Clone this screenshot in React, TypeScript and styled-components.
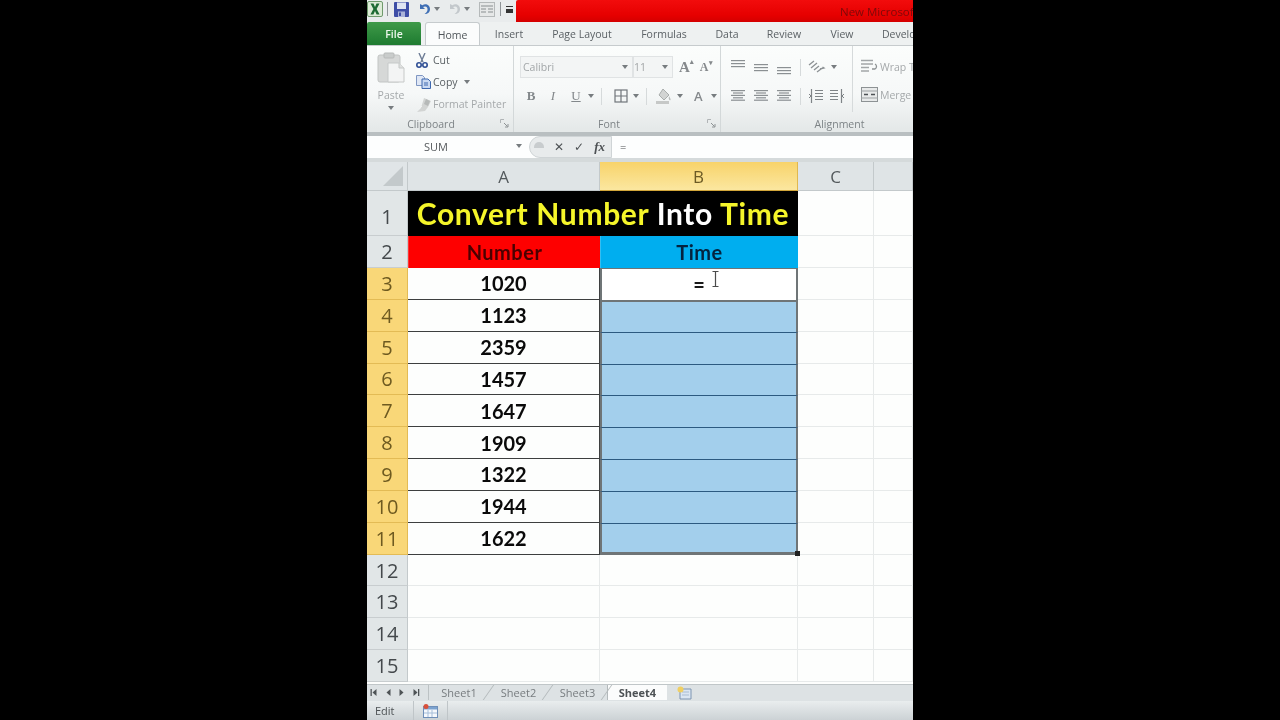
import React from 'react';
import styled, { createGlobalStyle } from 'styled-components';

const rows = ['1020', '1123', '2359', '1457', '1647', '1909', '1322', '1944', '1622'];
const tabs = [
  { label: 'Insert', w: 58 },
  { label: 'Page Layout', w: 88 },
  { label: 'Formulas', w: 76 },
  { label: 'Data', w: 50 },
  { label: 'Review', w: 64 },
  { label: 'View', w: 52 },
  { label: 'Developer', w: 78 },
];

const Caret = () => (
  <svg width="6" height="4" viewBox="0 0 6 4" style={{ flex: 'none' }}><path d="M0 0h6L3 4z" fill="#777c7f" /></svg>
);

const Lines = ({ widths, step = 3, color = '#8b9093' }: { widths: number[]; step?: number; color?: string }) => (
  <svg width="16" height={widths.length * step} viewBox={`0 0 16 ${widths.length * step}`}>
    {widths.map((w, i) => (
      <rect key={i} x={(16 - w) / 2} y={i * step} width={w} height="1.2" fill={color} />
    ))}
  </svg>
);

const ExcelIcon = () => (
  <svg width="16" height="16" viewBox="0 0 16 16">
    <rect x="0.5" y="0.5" width="15" height="15" rx="1.5" fill="#dcebd6" stroke="#6f9a6c" />
    <path d="M3.500 2.500h3L8 6l1.500-3.500h3L9.600 8l3 5.500h-3L8 10l-1.600 3.500h-3l3-5.500z" fill="#1e6b33" />
  </svg>
);

const SaveIcon = () => (
  <svg width="15" height="15" viewBox="0 0 15 15">
    <rect width="15" height="15" rx="1" fill="#3e4ea6" />
    <rect x="3" y="0.5" width="9" height="6.5" fill="#dfe4f2" />
    <rect x="4" y="9.5" width="7" height="5.5" fill="#aab3d8" />
    <rect x="5" y="10.5" width="2" height="3.5" fill="#3e4ea6" />
  </svg>
);

const UndoIcon = ({ color }: { color: string }) => (
  <svg width="14" height="14" viewBox="0 0 14 14">
    <path d="M3 2v5h5L6 5c3-1.500 5 .5 4.500 3-.3 1.800-1.500 3-3 4 3.500 0 5.500-2 5.500-5 0-4-4.500-6-7.500-3.800z" fill={color} />
  </svg>
);

const PreviewIcon = () => (
  <svg width="16" height="15" viewBox="0 0 16 15">
    <rect x="0.5" y="0.5" width="15" height="14" fill="#e6e8e8" stroke="#b5b9ba" />
    <path d="M2 4h12M2 7h5M9 7h5M2 10h5M9 10h5" stroke="#a8acad" strokeWidth="1.300" />
  </svg>
);

const PasteIcon = () => (
  <svg width="28" height="32" viewBox="0 0 28 32">
    <rect x="1" y="3" width="22" height="27" rx="2" fill="#d6d8d7" stroke="#c2c5c4" />
    <rect x="7" y="1" width="10" height="5" rx="1" fill="#c9cccb" stroke="#b7bab9" />
    <path d="M11 11h11l5 5v14H11z" fill="#f3f4f4" stroke="#c6c9c8" />
    <path d="M22 11v5h5" fill="#dfe1e0" stroke="#c6c9c8" />
  </svg>
);

const CutIcon = () => (
  <svg width="12" height="15" viewBox="0 0 12 15">
    <path d="M3 0l4 9M9 0L5 9" stroke="#6d7c95" strokeWidth="1.400" fill="none" />
    <circle cx="3" cy="12" r="2.200" fill="none" stroke="#2f4f95" strokeWidth="1.600" />
    <circle cx="9" cy="12" r="2.200" fill="none" stroke="#2f4f95" strokeWidth="1.600" />
  </svg>
);

const CopyIcon = () => (
  <svg width="15" height="14" viewBox="0 0 15 14">
    <path d="M0.500 0.500h6l2 2v8h-8z" fill="#dfe7f5" stroke="#7f96c2" />
    <path d="M6 4h6l2.500 2.500v7H6z" fill="#c9d9f2" stroke="#3f68ae" />
    <path d="M8 8h4M8 10h4" stroke="#3f68ae" />
  </svg>
);

const PainterIcon = () => (
  <svg width="16" height="15" viewBox="0 0 16 15">
    <path d="M8 1l7 3-3 6-3 4-8 1 4-4z" fill="#d2d4d3" />
    <path d="M10 2l4 2-2 5-4-2z" fill="#b6b9b8" />
    <path d="M3 12l3-3" stroke="#f2f3f3" />
  </svg>
);

const BorderIcon = () => (
  <svg width="14" height="14" viewBox="0 0 14 14" fill="none" stroke="#70757a" strokeWidth="1.200">
    <rect x="1" y="1" width="12" height="12" />
    <path d="M7 1v12M1 7h12" />
  </svg>
);

const FillIcon = () => (
  <svg width="16" height="16" viewBox="0 0 16 16">
    <path d="M7 1l6 6-5 5-5-5z" fill="#d2d4d3" stroke="#a9adac" />
    <path d="M13 8c1 2 2 3 1.500 4s-2.500 0-1.500-4z" fill="#b9bcbb" />
    <rect x="0" y="13" width="13" height="3" fill="#c6c8c7" />
  </svg>
);

const OrientIcon = () => (
  <svg width="18" height="14" viewBox="0 0 18 14" fill="none" stroke="#8c9194" strokeWidth="1.300">
    <path d="M1 5l5-4M3 8l6-5M6 10l5-4M9 12l4-3" />
    <path d="M12 9l4-1-1.500-1" />
  </svg>
);

const IndentIcon = ({ flip }: { flip?: boolean }) => (
  <svg width="16" height="14" viewBox="0 0 16 14" fill="none" stroke="#7f8487" style={flip ? { transform: 'scaleX(-1)' } : undefined}>
    <path d="M7 1.500h8M7 4.500h8M7 7.500h8M7 10.500h8M3.500 0v14" strokeWidth="1.200" />
    <path d="M1 5l2 2-2 2" />
  </svg>
);

const WrapIcon = () => (
  <svg width="17" height="15" viewBox="0 0 17 15" fill="none" stroke="#a2a6a8" strokeWidth="1.300">
    <path d="M0 1.500h12M0 5h12M0 8.500h8M0 12h8" />
    <path d="M14 5c2 1 2 4 0 5h-3" stroke="#8d9294" />
  </svg>
);

const MergeIcon = () => (
  <svg width="17" height="15" viewBox="0 0 17 15">
    <rect x="0.500" y="0.500" width="16" height="14" fill="#e8eaea" stroke="#8d9294" />
    <path d="M0 4h17M0 11h17" stroke="#9da1a3" />
    <path d="M3 7.500h4M14 7.500h-4" stroke="#4d5255" strokeWidth="1.300" />
  </svg>
);

const Launcher = () => (
  <LauncherBox>
    <svg width="9" height="9" viewBox="0 0 9 9" fill="none" stroke="#b0b4b6">
      <path d="M0.500 4V0.500H4" />
      <path d="M4 4l3.500 3.500M5 8h3V5" stroke="#8d9294" />
    </svg>
  </LauncherBox>
);

const MacroIcon = () => (
  <svg width="15" height="14" viewBox="0 0 15 14">
    <rect x="0.500" y="2.500" width="14" height="11" fill="#f5f8fc" stroke="#6f8fb8" />
    <rect x="1" y="3" width="13" height="2.500" fill="#7ba2cf" />
    <path d="M5 6v7M9 6v7M1 9h13" stroke="#a6bed9" />
    <circle cx="3" cy="2.500" r="2.500" fill="#d9503a" />
  </svg>
);

const NewSheetIcon = () => (
  <svg width="15" height="14" viewBox="0 0 15 14">
    <path d="M3 3h11v10H3z" fill="#dbe6f2" stroke="#7c94b1" />
    <path d="M5 6h7M5 9h7" stroke="#a9bcd2" />
    <circle cx="3.500" cy="3.500" r="3" fill="#f0cf62" />
  </svg>
);

const NavArrow = ({ dir, bar }: { dir: 'l' | 'r'; bar?: boolean }) => (
  <svg width="8" height="9" viewBox="0 0 8 9" fill="#4e5356">
    {dir === 'l' ? <path d="M6.500 1v7L2.500 4.500z" /> : <path d="M1.500 1v7l4-3.500z" />}
    {bar && <rect x={dir === 'l' ? 0.500 : 6} y="1" width="1.300" height="7" />}
  </svg>
);

export default function App() {
  return (
    <>
      <GlobalStyle />
      <Frame>
        <TitleBar>
          <QuickAccess>
            <QatItem><ExcelIcon /></QatItem>
            <QatSep $ml={4} />
            <QatItem $ml={6}><SaveIcon /></QatItem>
            <QatItem $ml={8}><UndoIcon color="#3f6fb5" /></QatItem>
            <QatItem $ml={3}><Caret /></QatItem>
            <QatItem $ml={7}><UndoIcon color="#c3c8cc" /></QatItem>
            <QatItem $ml={3}><Caret /></QatItem>
            <QatItem $ml={9}><PreviewIcon /></QatItem>
            <QatSep $ml={5} />
            <CustomizeMark />
          </QuickAccess>
          <RedBand>
            <AppTitle>New Microsoft Excel Worksheet</AppTitle>
          </RedBand>
        </TitleBar>

        <TabRow>
          <FileTab>File</FileTab>
          <HomeTab>Home</HomeTab>
          {tabs.map((t) => (
            <RibbonTab key={t.label} $w={t.w}>{t.label}</RibbonTab>
          ))}
        </TabRow>

        <Ribbon>
          <Group $w={147}>
            <GroupBody>
              <PasteBlock>
                <PasteIcon />
                <PasteLabel>Paste</PasteLabel>
                <Caret />
              </PasteBlock>
              <ClipStack>
                <ClipItem><ClipIcon><CutIcon /></ClipIcon><span>Cut</span></ClipItem>
                <ClipItem><ClipIcon><CopyIcon /></ClipIcon><span>Copy</span><Caret /></ClipItem>
                <ClipItem $muted><ClipIcon><PainterIcon /></ClipIcon><span>Format Painter</span></ClipItem>
              </ClipStack>
            </GroupBody>
            <GroupLabel $shift={18}>Clipboard</GroupLabel>
            <Launcher />
          </Group>

          <Group $w={207}>
            <FontBody>
              <FontRow>
                <FontBox $w={113}>
                  <span>Calibri</span>
                  <Caret />
                </FontBox>
                <SizeBox>
                  <span>11</span>
                  <Caret />
                </SizeBox>
                <GrowLetter $size={15}>A<sup>▴</sup></GrowLetter>
                <GrowLetter $size={12}>A<sup>▾</sup></GrowLetter>
              </FontRow>
              <FontRow>
                <StyleLetter $w={22} $weight={700}>B</StyleLetter>
                <StyleLetter $w={22} $italic>I</StyleLetter>
                <StyleLetter $w={24} $underline>U</StyleLetter>
                <Caret />
                <VSep $mr={7} />
                <BorderIcon />
                <Caret />
                <VSep $mr={4} />
                <FillIcon />
                <Caret />
                <ColorLetter>A</ColorLetter>
                <CaretGap><Caret /></CaretGap>
              </FontRow>
            </FontBody>
            <GroupLabel $shift={16}>Font</GroupLabel>
            <Launcher />
          </Group>

          <Group $w={238}>
            <AlignBody>
              <FontRow>
                <AlignCell $off={-3}><Lines widths={[14, 14, 14]} /></AlignCell>
                <AlignCell $off={1}><Lines widths={[14, 14, 14]} /></AlignCell>
                <AlignCell $off={4}><Lines widths={[14, 14, 14]} /></AlignCell>
                <VSep />
                <OrientIcon />
                <Caret />
              </FontRow>
              <FontRow>
                <AlignCell><Lines widths={[14, 10, 14, 10, 14]} step={2.4} /></AlignCell>
                <AlignCell><Lines widths={[14, 10, 14, 10, 14]} step={2.4} /></AlignCell>
                <AlignCell><Lines widths={[14, 10, 14, 10, 14]} step={2.4} /></AlignCell>
                <VSep />
                <IndentIcon />
                <IndentIcon flip />
              </FontRow>
            </AlignBody>
            <WrapColumn>
              <WrapItem><WrapIcon /><span>Wrap Text</span></WrapItem>
              <WrapItem><MergeIcon /><span>Merge &amp; Center</span></WrapItem>
            </WrapColumn>
            <GroupLabel>Alignment</GroupLabel>
          </Group>
        </Ribbon>

        <FormulaBar>
          <NameBox>
            <span>SUM</span>
            <Caret />
          </NameBox>
          <FormulaTools>
            <ToolDot />
            <ToolGlyph>✕</ToolGlyph>
            <ToolGlyph>✓</ToolGlyph>
            <FxGlyph>fx</FxGlyph>
          </FormulaTools>
          <FormulaInput>=</FormulaInput>
        </FormulaBar>

        <Sheet>
          <Corner>
            <svg width="20" height="20" viewBox="0 0 20 20"><path d="M20 0v20H0z" fill="#c3c9cb" /></svg>
          </Corner>
          <ColHead>A</ColHead>
          <ColHead $active>B</ColHead>
          <ColHead>C</ColHead>
          <ColHead />

          <RowHead $pushDown>1</RowHead>
          <TitleCell>
            Convert Number <White>Into</White> Time
          </TitleCell>
          <Blank />
          <Blank />

          <RowHead>2</RowHead>
          <HeadCell $bg="#fe0000" $fg="#4a0000">Number</HeadCell>
          <HeadCell $bg="#00aeef" $fg="#04233f">Time</HeadCell>
          <Blank />
          <Blank />

          {rows.map((value, i) => (
            <React.Fragment key={value}>
              <RowHead $active>{i + 3}</RowHead>
              <NumCell>{value}</NumCell>
              {i === 0 ? (
                <ActiveCell>
                  =
                  <IBeam>
                    <svg width="7" height="16" viewBox="0 0 7 16" fill="none" stroke="#4c4c4c" strokeWidth="1.200">
                      <path d="M0.500 0.500h6M3.500 0.500v15M0.500 15.500h6" />
                    </svg>
                  </IBeam>
                </ActiveCell>
              ) : (
                <SelectedCell $first={i === 1} $last={i === rows.length - 1}>
                  {i === rows.length - 1 && <FillHandle />}
                </SelectedCell>
              )}
              <Blank />
              <Blank />
            </React.Fragment>
          ))}

          {[12, 13, 14, 15].map((n) => (
            <React.Fragment key={n}>
              <RowHead>{n}</RowHead>
              <Blank />
              <Blank />
              <Blank />
              <Blank />
            </React.Fragment>
          ))}
        </Sheet>

        <SheetTabs>
          <NavBox>
            <NavArrow dir="l" bar />
            <NavArrow dir="l" />
            <NavArrow dir="r" />
            <NavArrow dir="r" bar />
          </NavBox>
          <SheetTab $w={60}>Sheet1</SheetTab>
          <SheetTab $w={59}>Sheet2</SheetTab>
          <SheetTab $w={59}>Sheet3</SheetTab>
          <CurrentTab>Sheet4</CurrentTab>
          <NewTab><NewSheetIcon /></NewTab>
        </SheetTabs>

        <StatusBar>
          <StatusText>Edit</StatusText>
          <StatusSep />
          <MacroIcon />
          <StatusSep />
        </StatusBar>
      </Frame>
    </>
  );
}

const GlobalStyle = createGlobalStyle`
  html, body {
    margin: 0;
    padding: 0;
    background: #000;
    overflow: hidden;
  }
  * { box-sizing: border-box; }
`;

const Frame = styled.div`
  width: 546px;
  height: 720px;
  margin-left: 367px;
  background: #f3f5f5;
  overflow: hidden;
  display: flex;
  flex-direction: column;
  font-family: "Open Sans", "Liberation Sans", sans-serif;
  filter: blur(0.35px);
`;

const TitleBar = styled.div`
  height: 22px;
  flex: none;
  display: flex;
  background: #e9eced;
`;

const QuickAccess = styled.div`
  width: 149px;
  flex: none;
  display: flex;
  align-items: center;
  padding-bottom: 4px;
`;

const QatItem = styled.div<{ $ml?: number }>`
  flex: none;
  display: flex;
  align-items: center;
  margin-left: ${(p) => p.$ml ?? 0}px;
`;

const QatSep = styled.div<{ $ml: number }>`
  width: 1px;
  height: 14px;
  flex: none;
  background: #8f9497;
  margin-left: ${(p) => p.$ml}px;
`;

const CustomizeMark = styled.div`
  width: 7px;
  height: 7px;
  flex: none;
  margin-left: 5px;
  border-top: 1px solid #333;
  border-bottom: 4px solid #333;
`;

const RedBand = styled.div`
  flex: 1;
  background: linear-gradient(#f20c0c, #e60000 70%, #d40000);
  border-radius: 2px 0 0 0;
  display: flex;
  align-items: center;
  overflow: hidden;
  padding-left: 324px;
`;

const AppTitle = styled.span`
  font-size: 11.500px;
  color: #7c0a0a;
  white-space: nowrap;
`;

const TabRow = styled.div`
  height: 24px;
  flex: none;
  display: flex;
  align-items: flex-end;
  background: #eef1f1;
  border-bottom: 1px solid #c6cbcd;
  overflow: hidden;
`;

const FileTab = styled.div`
  width: 54px;
  height: 23px;
  flex: none;
  margin-right: 4px;
  padding-top: 1px;
  background: linear-gradient(#3f9a49, #1e7b30);
  border-radius: 2px 2px 0 0;
  color: #eef8ee;
  font-size: 10.500px;
  font-weight: 600;
  display: flex;
  align-items: center;
  justify-content: center;
`;

const HomeTab = styled.div`
  width: 55px;
  height: 24px;
  flex: none;
  margin-bottom: -1px;
  background: #fbfcfc;
  border: 1px solid #c6cbcd;
  border-bottom: none;
  border-radius: 3px 3px 0 0;
  color: #50565a;
  font-size: 10.500px;
  display: flex;
  align-items: center;
  justify-content: center;
`;

const RibbonTab = styled.div<{ $w: number }>`
  width: ${(p) => p.$w}px;
  height: 23px;
  flex: none;
  padding-top: 1px;
  color: #5b6165;
  font-size: 10.500px;
  white-space: nowrap;
  display: flex;
  align-items: center;
  justify-content: center;
`;

const Ribbon = styled.div`
  height: 90px;
  flex: none;
  display: flex;
  background: linear-gradient(#fbfdfc 0%, #f6f8f8 55%, #e5e9e9 96%);
  border-bottom: 4px solid #b9bfc1;
  overflow: hidden;
`;

const Group = styled.div<{ $w: number }>`
  width: ${(p) => p.$w}px;
  flex: none;
  position: relative;
  border-right: 1px solid #d3d8d9;
  display: flex;
`;

const GroupBody = styled.div`
  display: flex;
  padding: 6px 0 0 11px;
  gap: 12px;
`;

const PasteBlock = styled.div`
  width: 26px;
  display: flex;
  flex-direction: column;
  align-items: center;
  gap: 1px;
`;

const PasteLabel = styled.span`
  font-size: 10.500px;
  color: #a5a9ab;
  margin-top: 3px;
  margin-bottom: 3px;
`;

const ClipStack = styled.div`
  display: flex;
  flex-direction: column;
  gap: 6px;
`;

const ClipIcon = styled.span`
  width: 16px;
  flex: none;
  display: flex;
  align-items: center;
  line-height: 0;
`;

const ClipItem = styled.div<{ $muted?: boolean }>`
  height: 16px;
  display: flex;
  align-items: center;
  gap: 1px;
  font-size: 10.500px;
  white-space: nowrap;
  color: ${(p) => (p.$muted ? '#a5a9ab' : '#5a6064')};

  span + svg {
    margin-left: 5px;
  }
`;

const GroupLabel = styled.div<{ $shift?: number }>`
  position: absolute;
  left: 0;
  right: ${(p) => p.$shift ?? 0}px;
  top: 71px;
  text-align: center;
  font-size: 10.500px;
  color: #7d8386;
`;

const LauncherBox = styled.div`
  position: absolute;
  right: 4px;
  top: 73px;
  line-height: 0;
`;

const FontBody = styled.div`
  display: flex;
  flex-direction: column;
  gap: 9px;
  padding: 11px 0 0 6px;
`;

const FontRow = styled.div`
  height: 20px;
  display: flex;
  align-items: center;
  gap: 5px;
`;

const FontBox = styled.div<{ $w: number }>`
  width: ${(p) => p.$w}px;
  height: 22px;
  flex: none;
  margin-right: -5px;
  background: #f3f5f5;
  border: 1px solid #e0e3e4;
  padding: 0 4px 0 2px;
  font-size: 10.500px;
  color: #a2a6a8;
  display: flex;
  align-items: center;
  justify-content: space-between;
`;

const SizeBox = styled(FontBox).attrs({ $w: 40 })`
  padding-left: 0;
`;

const GrowLetter = styled.span<{ $size: number }>`
  font-family: "Liberation Serif", serif;
  font-weight: 700;
  font-size: ${(p) => p.$size}px;
  color: #85898c;
  margin-left: 6px;
  display: inline-flex;

  & + & {
    margin-left: 1px;
  }

  sup {
    font-size: 7px;
    line-height: 7px;
  }
`;

const StyleLetter = styled.span<{ $w: number; $weight?: number; $italic?: boolean; $underline?: boolean }>`
  width: ${(p) => p.$w}px;
  flex: none;
  margin-right: -5px;
  text-align: center;
  font-family: "Liberation Serif", serif;
  font-size: 13px;
  color: #83888b;
  font-weight: ${(p) => p.$weight ?? 400};
  font-style: ${(p) => (p.$italic ? 'italic' : 'normal')};
  text-decoration: ${(p) => (p.$underline ? 'underline' : 'none')};
`;

const ColorLetter = styled.span`
  font-size: 13px;
  font-weight: 600;
  color: #85898c;
  margin-left: 6px;
`;

const CaretGap = styled.span`
  display: flex;
  margin-left: 3px;
`;

const VSep = styled.div<{ $mr?: number }>`
  width: 1px;
  height: 17px;
  flex: none;
  background: #d6dadb;
  margin: 0 ${(p) => p.$mr ?? 2}px 0 2px;
`;

const AlignBody = styled.div`
  width: 131px;
  flex: none;
  display: flex;
  flex-direction: column;
  gap: 9px;
  padding: 11px 0 0 8px;
`;

const AlignCell = styled.div<{ $off?: number }>`
  width: 18px;
  flex: none;
  display: flex;
  justify-content: center;
  transform: translateY(${(p) => p.$off ?? 0}px);
`;

const WrapColumn = styled.div`
  display: flex;
  flex-direction: column;
  gap: 13px;
  padding-top: 13px;
  border-left: 1px solid #d6dadb;
  height: 66px;
  padding-left: 8px;
`;

const WrapItem = styled.div`
  display: flex;
  align-items: center;
  gap: 2px;
  font-size: 10.500px;
  color: #a5a9ab;
  white-space: nowrap;
`;

const FormulaBar = styled.div`
  height: 22px;
  flex: none;
  display: flex;
  background: #fdfefe;
`;

const NameBox = styled.div`
  width: 162px;
  flex: none;
  display: flex;
  align-items: center;
  justify-content: space-between;
  padding: 0 7px 2px 57px;
  font-size: 11px;
  color: #55595c;
`;

const FormulaTools = styled.div`
  width: 83px;
  flex: none;
  display: flex;
  align-items: center;
  padding: 0 0 1px 4px;
  gap: 10px;
  background: #e8ebec;
  border-radius: 11px 0 0 11px;
  border: 1px solid #cfd4d6;
`;

const ToolDot = styled.div`
  width: 10px;
  height: 6px;
  background: #c8ccce;
  border-radius: 5px 5px 0 0;
  margin-bottom: 3px;
`;

const ToolGlyph = styled.span`
  font-family: "DejaVu Sans", sans-serif;
  font-size: 12px;
  font-weight: 700;
  color: #4d5154;
`;

const FxGlyph = styled.span`
  font-family: "Liberation Serif", serif;
  font-style: italic;
  font-weight: 700;
  font-size: 13px;
  color: #4d5154;
`;

const FormulaInput = styled.div`
  flex: 1;
  display: flex;
  align-items: center;
  padding: 0 0 2px 8px;
  font-size: 11px;
  color: #4a4d50;
`;

const Sheet = styled.div`
  margin-top: 4px;
  box-shadow: 0 -4px 0 #d5dadb;
  height: 522px;
  flex: none;
  display: grid;
  grid-template-columns: 41px 192px 198px 76px 39px;
  grid-template-rows: 29px 45px 32px repeat(13, 31.850px);
  background: #fdfefd;
  overflow: hidden;
  font-family: Lato, "Open Sans", sans-serif;
`;

const Corner = styled.div`
  background: #e0e5e7;
  border-right: 1px solid #c3c9cb;
  border-bottom: 1px solid #c3c9cb;
  display: flex;
  align-items: flex-end;
  justify-content: flex-end;
  padding: 0 4px 4px 0;
`;

const ColHead = styled.div<{ $active?: boolean }>`
  background: ${(p) => (p.$active ? 'linear-gradient(#f8d36a, #fbe7a0)' : '#dfe4e6')};
  border-right: 1px solid ${(p) => (p.$active ? '#e0b84f' : '#c3c9cb')};
  border-bottom: 1px solid ${(p) => (p.$active ? '#d2a63a' : '#c3c9cb')};
  display: flex;
  align-items: center;
  justify-content: center;
  padding-top: 1px;
  font-family: "Open Sans", sans-serif;
  font-size: 17px;
  color: ${(p) => (p.$active ? '#6b5a25' : '#53595c')};
`;

const RowHead = styled.div<{ $active?: boolean; $pushDown?: boolean }>`
  background: ${(p) => (p.$active ? '#f9d778' : '#e1e6e7')};
  border-bottom: 1px solid ${(p) => (p.$active ? '#e3bb55' : '#c8cdcf')};
  border-right: 1px solid ${(p) => (p.$active ? '#e3bb55' : '#c3c9cb')};
  display: flex;
  align-items: center;
  justify-content: center;
  padding-top: ${(p) => (p.$pushDown ? 7 : 0)}px;
  font-family: "Open Sans", sans-serif;
  font-size: 20px;
  color: ${(p) => (p.$active ? '#6e5a20' : '#44494c')};
`;

const Blank = styled.div`
  border-right: 1px solid #e7eaea;
  border-bottom: 1px solid #e7eaea;
`;

const TitleCell = styled.div`
  grid-column: span 2;
  background: #000;
  color: #f5f52a;
  font-size: 30px;
  font-weight: 700;
  padding-bottom: 1px;
  display: flex;
  align-items: center;
  justify-content: center;
  white-space: pre;
  letter-spacing: 0.650px;
`;

const White = styled.span`
  color: #fff;
`;

const HeadCell = styled.div<{ $bg: string; $fg: string }>`
  background: ${(p) => p.$bg};
  color: ${(p) => p.$fg};
  font-size: 20px;
  font-weight: 700;
  letter-spacing: 0.500px;
  display: flex;
  align-items: center;
  justify-content: center;
  border-left: 1px solid #fff3;
`;

const NumCell = styled.div`
  border-right: 1px solid #3d3f3f;
  border-bottom: 1px solid #3d3f3f;
  color: #0a0a0a;
  font-size: 20px;
  font-weight: 700;
  display: flex;
  align-items: center;
  justify-content: center;
`;

const ActiveCell = styled.div`
  position: relative;
  background: #fff;
  border-left: 2px solid #6f7577;
  border-right: 2px solid #6f7577;
  border-top: 1px solid #6f7577;
  display: flex;
  align-items: center;
  justify-content: center;
  color: #1a1a1a;
  font-size: 20px;
  font-weight: 700;
  padding-bottom: 1px;
`;

const IBeam = styled.span`
  position: absolute;
  left: 110px;
  top: 2px;
  line-height: 0;
`;

const SelectedCell = styled.div<{ $first?: boolean; $last?: boolean }>`
  position: relative;
  background: #a3cfec;
  border-left: 2px solid #6f7577;
  border-right: 2px solid #6f7577;
  border-top: ${(p) => (p.$first ? '2px solid #6f7577' : '1px solid #2c5a80')};
  border-bottom: ${(p) => (p.$last ? '3px solid #6f7577' : 'none')};
`;

const FillHandle = styled.span`
  position: absolute;
  right: -4px;
  bottom: -4px;
  width: 5px;
  height: 5px;
  background: #222;
`;

const SheetTabs = styled.div`
  height: 17px;
  flex: none;
  display: flex;
  align-items: stretch;
  background: #dde2e4;
  border-top: 1px solid #c0c6c8;
  padding-bottom: 1px;
  font-size: 11px;
  overflow: hidden;
`;

const NavBox = styled.div`
  width: 62px;
  flex: none;
  display: flex;
  align-items: center;
  gap: 6px;
  padding-left: 3px;
  border-right: 1px solid #bcc2c4;
`;

const SheetTab = styled.div<{ $w: number }>`
  width: ${(p) => p.$w}px;
  flex: none;
  position: relative;
  display: flex;
  align-items: center;
  justify-content: center;
  color: #777c7f;

  &::after {
    content: '';
    position: absolute;
    right: 0;
    top: 0;
    bottom: 0;
    width: 1px;
    background: #b3b9bb;
    transform: skewX(-35deg);
  }
`;

const CurrentTab = styled.div`
  width: 60px;
  flex: none;
  background: #fbfcfc;
  border-left: 1px solid #b3b9bb;
  display: flex;
  align-items: center;
  justify-content: center;
  font-weight: 700;
  color: #4d5255;
`;

const NewTab = styled.div`
  width: 34px;
  flex: none;
  display: flex;
  align-items: center;
  justify-content: center;
  line-height: 0;
`;

const StatusBar = styled.div`
  flex: 1;
  display: flex;
  align-items: center;
  background: linear-gradient(#e9edee, #ccd2d5);
  padding-left: 8px;
  gap: 9px;
`;

const StatusText = styled.span`
  font-size: 11px;
  color: #4d5255;
  width: 29px;
`;

const StatusSep = styled.div`
  width: 1px;
  height: 19px;
  background: #bfc5c8;
`;
